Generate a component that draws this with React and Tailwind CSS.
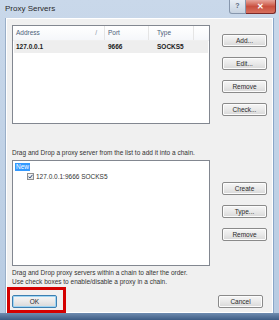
import React from 'react';

const font = { fontFamily: '"Liberation Sans", Arial, sans-serif' };

const Btn = ({ children, isDefault }) => (
  <div
    className={`w-[45px] h-[13px] flex items-center justify-center rounded-[2px] border text-[6.5px] text-[#2a2a2a] bg-gradient-to-b from-[#f6f6f6] via-[#e9e9e9] to-[#d8d8d8] ${
      isDefault ? 'border-[#3c7fb1] shadow-[inset_0_0_0_1px_#9fd5f3]' : 'border-[#8a8a8a] shadow-[inset_0_0_0_1px_#fcfcfc]'
    }`}
  >
    {children}
  </div>
);

export default function App() {
  return (
    <div
      className="w-[279px] h-[320px] flex flex-col bg-gradient-to-b from-[#c9d8ea] to-[#b7cbe2] overflow-hidden"
      style={font}
    >
      {/* title bar */}
      <div className="h-[18px] flex items-start shrink-0">
        <div className="pl-[5px] pt-[4px] text-[8px] text-[#2a2a2a] leading-[9px]">Proxy Servers</div>
        <div className="ml-auto mr-[3px] flex">
          <div className="w-[17px] h-[14px] flex items-center justify-center text-[7px] font-bold text-[#5a6a80] rounded-bl-[3px] border border-t-0 border-[#8797ad] bg-gradient-to-b from-[#e8eef5] to-[#c7d3e1]">
            ?
          </div>
          <div className="w-[30px] h-[14px] flex items-center justify-center text-[8px] font-bold text-white rounded-br-[3px] border border-t-0 border-l-0 border-[#7a2a2a] bg-gradient-to-b from-[#e6a59c] via-[#c9503f] to-[#d7705f]">
            ✕
          </div>
        </div>
      </div>

      <div className="flex flex-1 min-h-0">
        <div className="w-[6px] shrink-0 border-r border-[#9aafc8]" />

        {/* client area */}
        <div className="relative flex-1 bg-[#f0f0f0] px-[5px] pt-[6px] text-[6.5px] text-[#333] border border-[#ffffff]">
          {/* proxy list */}
          <div className="flex">
            <div className="w-[198px] h-[99px] bg-white border border-[#828790]">
              <div className="h-[15px] flex items-center text-[6.5px] text-[#4c607a] border-b border-[#f0f0f0] bg-gradient-to-b from-white to-[#f5f7fa]">
                <div className="w-[92px] pl-[3px] flex justify-between pr-[7px] h-full items-center border-r border-[#e5e5e5]">
                  <span>Address</span>
                  <span className="text-[#8090a0]">/</span>
                </div>
                <div className="w-[44px] pl-[3px] h-full flex items-center border-r border-[#e5e5e5]">Port</div>
                <div className="w-[45px] pl-[8px] h-full flex items-center border-r border-[#e5e5e5]">Type</div>
              </div>
              <div className="mx-[1px] h-[12px] flex items-center font-bold text-[6.5px] text-[#1a1a1a] bg-[#eeeeee]">
                <div className="w-[91px] pl-[2px]">127.0.0.1</div>
                <div className="w-[44px] pl-[3px]">9666</div>
                <div className="pl-[8px]">SOCKS5</div>
              </div>
            </div>
            <div className="ml-[12px] pt-[9px] flex flex-col gap-[10px]">
              <Btn>Add...</Btn>
              <Btn>Edit...</Btn>
              <Btn>Remove</Btn>
              <Btn>Check...</Btn>
            </div>
          </div>

          <div className="mt-[24px] h-[9px] leading-[9px] whitespace-nowrap">
            Drag and Drop a proxy server from the list to add it into a chain.
          </div>

          {/* chain tree */}
          <div className="mt-[3px] flex">
            <div className="w-[198px] h-[106px] bg-white border border-[#828790] pt-[1px] pl-[2px]">
              <div className="inline-block bg-[#3399ff] text-white px-[1px] leading-[8px] h-[8px]">New</div>
              <div className="flex items-center pl-[12px] mt-[1px] gap-[2px]">
                <div className="w-[7px] h-[7px] border border-[#8f8f8f] bg-gradient-to-b from-[#f4f4f4] to-[#e2e2e2] flex items-center justify-center">
                  <svg width="5" height="5" viewBox="0 0 5 5">
                    <path d="M0.5 2.6 L1.9 4 L4.5 0.8" stroke="#2a4a7a" strokeWidth="1" fill="none" />
                  </svg>
                </div>
                <span className="leading-[8px]">127.0.0.1:9666 SOCKS5</span>
              </div>
            </div>
            <div className="ml-[12px] pt-[22px] flex flex-col gap-[10px]">
              <Btn>Create</Btn>
              <Btn>Type...</Btn>
              <Btn>Remove</Btn>
            </div>
          </div>

          <div className="mt-[2px] leading-[9px] whitespace-nowrap">
            <div>Drag and Drop proxy servers within a chain to alter the order.</div>
            <div>Use check boxes to enable/disable a proxy in a chain.</div>
          </div>

          <div className="mt-[9px] flex justify-between">
            <Btn isDefault>OK</Btn>
            <div className="mr-[4px]">
              <Btn>Cancel</Btn>
            </div>
          </div>

          {/* red highlight annotation */}
          <div className="absolute left-[0px] top-[268px] w-[59px] h-[26px] border-[3px] border-[#d40000]" />
        </div>

        <div className="w-[7px] shrink-0 border-l border-[#8aa6c8]" />
      </div>

      <div className="h-[7px] shrink-0 bg-gradient-to-b from-[#6f8cb0] to-[#3d5c84]" />
    </div>
  );
}
